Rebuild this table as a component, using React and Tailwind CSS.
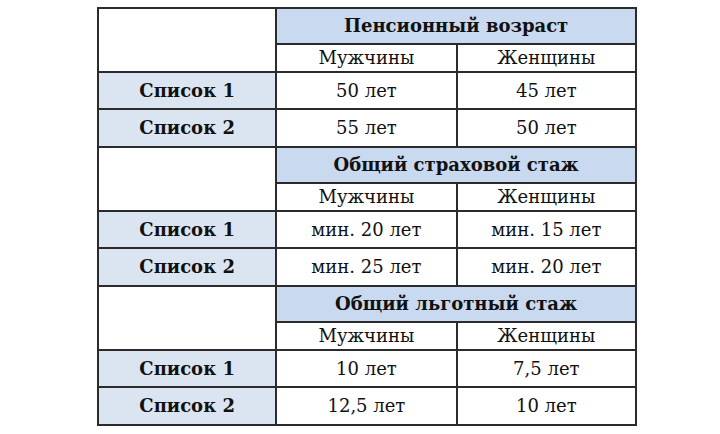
import React from "react";

const sections = [
  {
    title: "Пенсионный возраст",
    rows: [
      ["Список 1", "50 лет", "45 лет"],
      ["Список 2", "55 лет", "50 лет"],
    ],
  },
  {
    title: "Общий страховой стаж",
    rows: [
      ["Список 1", "мин. 20 лет", "мин. 15 лет"],
      ["Список 2", "мин. 25 лет", "мин. 20 лет"],
    ],
  },
  {
    title: "Общий льготный стаж",
    rows: [
      ["Список 1", "10 лет", "7,5 лет"],
      ["Список 2", "12,5 лет", "10 лет"],
    ],
  },
];

const cell = "border-2 border-[#2b2b2b] text-center p-0";

const App = () => {
  return (
    <div className="w-[720px] h-[434px] bg-white pl-[97px] pt-[7px]">
      <table
        className="w-[540px] border-collapse text-[#111] text-[18px] leading-none"
        style={{ fontFamily: '"DejaVu Serif", "Liberation Serif", serif' }}
      >
        <colgroup>
          <col className="w-[179px]" />
          <col className="w-[181px]" />
          <col className="w-[180px]" />
        </colgroup>
        <tbody>
          {sections.map((s) => (
            <React.Fragment key={s.title}>
              <tr className="h-[36px]">
                <td rowSpan={2} className={`${cell} bg-white`}></td>
                <td colSpan={2} className={`${cell} bg-[#c9d9ef] font-bold`}>
                  {s.title}
                </td>
              </tr>
              <tr className="h-[28px]">
                <td className={cell}>Мужчины</td>
                <td className={cell}>Женщины</td>
              </tr>
              {s.rows.map((r, i) => (
                <tr key={r[0]} className={i === 0 ? "h-[37px]" : "h-[38px]"}>
                  <td className={`${cell} bg-[#dbe5f1] font-bold`}>{r[0]}</td>
                  <td className={cell}>{r[1]}</td>
                  <td className={cell}>{r[2]}</td>
                </tr>
              ))}
            </React.Fragment>
          ))}
        </tbody>
      </table>
    </div>
  );
};

export default App;
